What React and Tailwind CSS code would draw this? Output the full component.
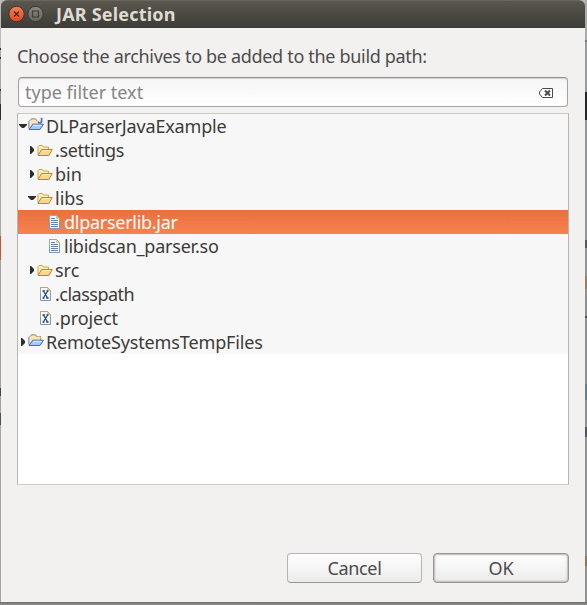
import React from "react";

const FONT = "font-['Noto_Sans','Open_Sans',sans-serif]";

function Caret({ open }) {
  return (
    <svg className="block h-[24px] w-[10px] shrink-0" viewBox="0 0 10 24" fill="#2e2d2b">
      {open ? <path d="M1 10H9V11L6 14H4L1 11Z" /> : <path d="M3 8H4L7 11V13L4 16H3Z" />}
    </svg>
  );
}

function Folder() {
  return (
    <svg className="block h-[16px] w-[16px] shrink-0" viewBox="0 0 16 16">
      <path d="M1 13V4.5L2 3.5H5.5L6.5 5H11.5V7.5" fill="#fbeebf" stroke="#cfa055" />
      <path d="M1 13.5 4.5 7.5H15.3L11.8 13.5Z" fill="#fad78c" stroke="#c08431" strokeLinejoin="round" />
      <path d="M5.2 8.6H13.6" stroke="#fff0c4" />
    </svg>
  );
}

function Project({ java }) {
  return (
    <svg className="mt-[-4px] block h-[16px] w-[16px] shrink-0" viewBox="0 0 16 16">
      <path d="M0.8 12.5V5.5L3.5 2.8H7.5L8.5 4.5H12.5V9" fill="#f8e6ae" stroke="#6c84c4" />
      <path d="M3.5 2.8H7.5L8.5 4.5H12.5V7" fill="none" stroke="#c9ad72" />
      <path d="M1 13.5 4.8 8.2H15.5L12 13.5Z" fill="#a2ccfa" stroke="#4567b5" strokeLinejoin="round" />
      <path d="M5.4 9.3H13.6" stroke="#e5f2ff" />
      {java && (
        <>
          <path d="M9.5 1.5H16V7.2H9.5Z" fill="#f1f5fb" />
          <path d="M13.6 1.8V5Q13.6 6.9 11.6 6.9 10.2 6.9 10.2 5.5" fill="none" stroke="#4a78b8" strokeWidth="1.7" />
        </>
      )}
    </svg>
  );
}

function Doc({ xml }) {
  return (
    <svg className="block h-[16px] w-[13px] shrink-0" viewBox="0 0 13 16">
      <path d="M1.5 1.5H8.5L11.5 4.5V14.5H1.5Z" fill="#f5f9fe" stroke="#8496b0" />
      <path d="M1.5 8V1.5H8.5L11.5 4.5V7" fill="none" stroke="#b5a878" />
      <path d="M8 1.5V5H11.5Z" fill="#dcc98c" />
      {xml ? (
        <path d="M3.5 5H5.8M7.5 5H9.5M3.5 12H5.5M7.2 12H9.6M4.5 5 8.5 12M8.6 5 4.4 12" fill="none" stroke="#26456f" strokeWidth="1.3" />
      ) : (
        <path d="M3 4.5H7M3 6.5H10M3 8.5H10M3 10.5H10M3 12.5H10" stroke="#6681b4" />
      )}
    </svg>
  );
}

function Row({ indent, caret, icon, gap, selected, tracking = "", children }) {
  return (
    <div
      className={`flex h-[24px] items-center whitespace-nowrap ${indent} ${
        selected ? "bg-gradient-to-b from-[#e9703e] to-[#f7824f] text-white" : "bg-[#f7f7f7] text-[#3c3b37]"
      }`}
    >
      {caret && <Caret open={caret === "open"} />}
      {icon}
      <span className={`${gap} ${tracking} leading-[24px]`}>{children}</span>
    </div>
  );
}

const leftEdge = [
  ["h-[48px]", "bg-[#bcbcbb]"], ["h-[2px]", "bg-[#333]"], ["h-[7px]", "bg-[#aaa]"], ["h-[2px]", "bg-[#333]"],
  ["h-[30px]", "bg-[#aaa]"], ["h-[2px]", "bg-[#333]"], ["h-[13px]", "bg-[#8e8b89]"], ["h-[16px]", "bg-[#33302e]"],
  ["h-[116px]", "bg-[#a8a8a8]"], ["h-[24px]", "bg-[#b95a38]"], ["h-[128px]", "bg-[#a4a4a4]"], ["h-[8px]", "bg-[#40454b]"],
  ["h-[17px]", "bg-[#a4a4a4]"], ["h-[12px]", "bg-[#4b5054]"], ["grow", "bg-[#a6a6a6]"],
];

const rightEdge = [
  ["h-[40px]", "bg-[#aaaaab]"], ["h-[2px]", "bg-[#777]"], ["h-[50px]", "bg-[#9b9c9e]"], ["h-[28px]", "bg-[#242424]"],
  ["h-[120px]", "bg-[#969798]"], ["h-[8px]", "bg-[#54585d]"], ["h-[28px]", "bg-[#939495]"], ["h-[13px]", "bg-[#96815f]"],
  ["h-[27px]", "bg-[#909192]"], ["h-[2px]", "bg-[#4c4c4c]"], ["h-[66px]", "bg-[#909192]"], ["h-[16px]", "bg-[#627f90]"],
  ["h-[27px]", "bg-[#909192]"], ["h-[10px]", "bg-[#4f5860]"], ["h-[119px]", "bg-[#919293]"], ["h-[10px]", "bg-[#8b7656]"],
  ["grow", "bg-[#929292]"],
];

function Edge({ width, parts }) {
  return (
    <div className={`flex shrink-0 flex-col ${width}`}>
      {parts.map(([h, c], i) => <div key={i} className={`${h} ${c}`} />)}
    </div>
  );
}

export default function App() {
  return (
    <div className={`flex h-[605px] w-[587px] flex-col overflow-hidden bg-[#858584] ${FONT} text-[18px] text-[#4c4c4c]`}>
      <div className="flex h-[602px]">
        <Edge width="w-[1px]" parts={leftEdge} />
        <div className="flex w-[584px] flex-col bg-[#bdbdbd]">
          <header className="flex h-[28px] shrink-0 items-center rounded-t-[6px] border-t border-[#69675d] bg-gradient-to-b from-[#5a574e] to-[#3d3c37] pl-[7px]">
            <svg className="mt-[-1px] block h-[18px] w-[37px] shrink-0" viewBox="0 0 37 18">
              <defs>
                <linearGradient id="close" x1="0" y1="0" x2="0" y2="1">
                  <stop stopColor="#f58158" />
                  <stop offset="1" stopColor="#e0491c" />
                </linearGradient>
                <linearGradient id="max" x1="0" y1="0" x2="0" y2="1">
                  <stop stopColor="#8b8980" />
                  <stop offset="1" stopColor="#65635b" />
                </linearGradient>
              </defs>
              <circle cx="8.5" cy="9" r="7.7" fill="url(#close)" stroke="#383630" />
              <path d="M6 6.5 11 11.5M11 6.5 6 11.5" stroke="#43271c" strokeWidth="1.2" />
              <circle cx="27.5" cy="9" r="7.7" fill="url(#max)" stroke="#383630" />
              <path d="M24.5 6H30.5V12H24.5Z" fill="none" stroke="#3c3b36" strokeWidth="1.2" />
            </svg>
            <span className="ml-[11px] mt-[-2px] whitespace-nowrap text-[18px] font-bold leading-[26px] tracking-[0.2px] text-[#dfdbd2]">JAR Selection</span>
          </header>
          <main className="flex grow flex-col bg-[#f2f1f0] px-[16px]">
            <p className="mt-[16px] h-[24px] whitespace-nowrap leading-[24px] tracking-[-0.32px]">Choose the archives to be added to the build path:</p>
            <div className="ml-[1px] mt-[9px] flex h-[30px] w-[550px] shrink-0 items-center justify-between rounded-[4px] border border-[#a5a4a2] border-t-[#8f8e8c] bg-gradient-to-b from-[#f5f5f5] to-white pl-[6px] pr-[14px] shadow-[inset_0_1px_1px_#d7d7d7]">
              <span className="whitespace-nowrap leading-[26px] text-[#858585]">type filter text</span>
              <svg className="mt-[2px] block h-[12px] w-[15px]" viewBox="0 0 15 12">
                <path d="M4.5 1.5H14.5V10.5H4.5L1.5 7V5Z" fill="#fff" stroke="#4b4b4b" />
                <path d="M7 3.5 12 8.5M12 3.5 7 8.5" stroke="#4b4b4b" strokeWidth="2" />
              </svg>
            </div>
            <div className="mt-[6px] h-[372px] w-[552px] shrink-0 border border-[#b8b6b2] border-b-[#d0cdc9] border-t-[#cac8c4] bg-white">
              <Row indent="pl-0" caret="open" icon={<Project java />} gap="ml-[2px]" tracking="tracking-[-0.17px]">DLParserJavaExample</Row>
              <Row indent="pl-[9px]" caret="closed" icon={<Folder />} gap="ml-[2px]" tracking="tracking-[-0.33px]">.settings</Row>
              <Row indent="pl-[9px]" caret="closed" icon={<Folder />} gap="ml-[2px]">bin</Row>
              <Row indent="pl-[9px]" caret="open" icon={<Folder />} gap="ml-[2px]">libs</Row>
              <Row indent="pl-[30px]" selected icon={<Doc />} gap="ml-[3px]" tracking="tracking-[-0.28px]">dlparserlib.jar</Row>
              <Row indent="pl-[30px]" icon={<Doc />} gap="ml-[3px]" tracking="tracking-[-0.22px]">libidscan_parser.so</Row>
              <Row indent="pl-[9px]" caret="closed" icon={<Folder />} gap="ml-[2px]">src</Row>
              <Row indent="pl-[21px]" icon={<Doc xml />} gap="ml-[3px]" tracking="tracking-[-0.5px]">.classpath</Row>
              <Row indent="pl-[21px]" icon={<Doc xml />} gap="ml-[3px]" tracking="tracking-[-0.1px]">.project</Row>
              <Row indent="pl-0" caret="closed" icon={<Project />} gap="ml-[2px]" tracking="tracking-[-0.13px]">RemoteSystemsTempFiles</Row>
            </div>
            <div className="mt-[68px] flex h-[30px] justify-end gap-[11px]">
              <button className="h-[30px] w-[135px] rounded-[4px] border border-[#b5b4b2] border-b-[#999896] bg-gradient-to-b from-white to-[#ebebea] leading-[27px] tracking-[-0.35px]">Cancel</button>
              <button className="h-[30px] w-[136px] rounded-[4px] border border-[#979694] bg-gradient-to-b from-white to-[#ebebea] leading-[27px] shadow-[inset_0_0_0_1px_#c6c5c3,inset_0_0_2px_1px_#c6c5c3]">OK</button>
            </div>
          </main>
        </div>
        <Edge width="w-[2px]" parts={rightEdge} />
      </div>
      <div className="h-[3px] bg-gradient-to-b from-[#6d6d6c] to-[#91918f]" />
    </div>
  );
}
